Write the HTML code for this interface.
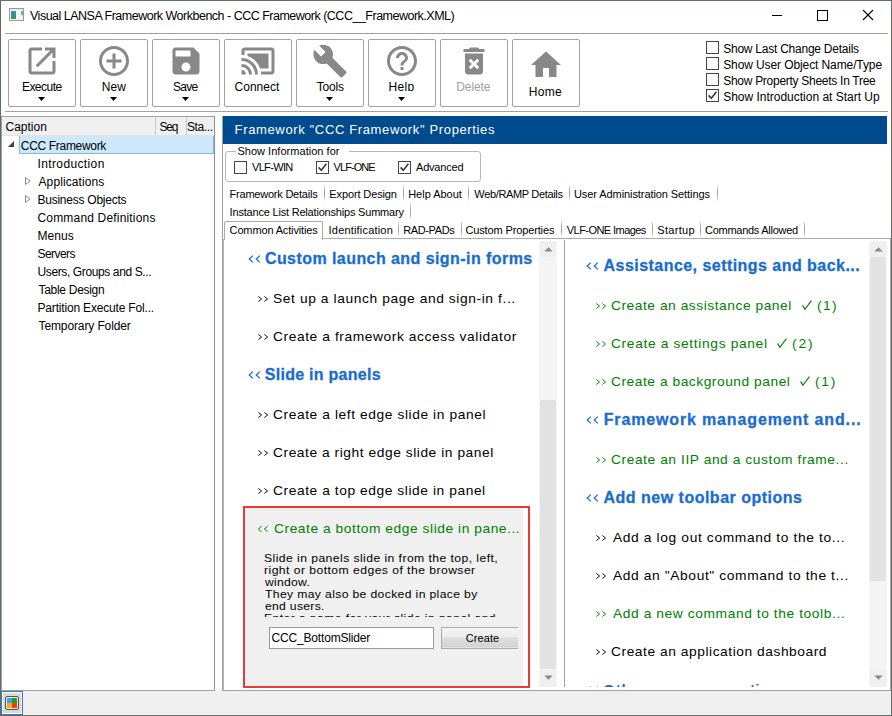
<!DOCTYPE html>
<html><head><meta charset="utf-8"><style>
html,body{margin:0;padding:0;}
body{width:892px;height:716px;position:relative;overflow:hidden;background:#fff;font-family:"Liberation Sans",sans-serif;}
body>div,body>svg{position:absolute;box-sizing:content-box;}
.t{white-space:pre;line-height:normal;}
</style></head><body>
<div style="left:0;top:0;width:890px;height:714px;border:1px solid #5e6e62;"></div>
<div style="left:9px;top:8px;width:13px;height:11px;border:1px solid #9a9a9a;background:#f4f4f4"></div><div style="left:10px;top:9px;width:13px;height:1px;background:#e0e4ea"></div><div style="left:11px;top:11px;width:5px;height:8px;background:linear-gradient(#5080c0,#2f9a60)"></div><div style="left:21px;top:11px;width:2px;height:4px;background:linear-gradient(#7aa0e0,#70c070)"></div><div style="left:772px;top:15px;width:10px;height:1px;background:#000"></div><div style="left:817px;top:10px;width:9px;height:9px;border:1px solid #000"></div><svg style="left:862px;top:9px" width="12" height="12" viewBox="0 0 12 12"><path d="M1 1L11 11M11 1L1 11" stroke="#000" stroke-width="1.1"/></svg><div style="left:5px;top:33px;width:883px;height:1px;background:#a0a0a0"></div><div style="left:5px;top:111px;width:883px;height:1px;background:#a0a0a0"></div><div style="left:8px;top:39px;width:66px;height:66px;border:1px solid #a3a3a3;border-radius:2px;background:#fff"></div><svg style="left:24px;top:43px" width="36" height="36" viewBox="0 0 24 24"><path fill="#888" d="M19 19H5V5h7V3H5c-1.11 0-2 .9-2 2v14c0 1.1.89 2 2 2h14c1.1 0 2-.9 2-2v-7h-2v7zM14 3v2h3.59l-9.830 9.83 1.41 1.41L19 6.41V10h2V3h-7z"/></svg><svg style="left:38px;top:97px" width="7" height="4" viewBox="0 0 7 4"><path d="M0 0H7L3.5 4z" fill="#000"/></svg><div style="left:80px;top:39px;width:66px;height:66px;border:1px solid #a3a3a3;border-radius:2px;background:#fff"></div><svg style="left:96px;top:43px" width="36" height="36" viewBox="0 0 24 24"><path fill="#888" d="M13 7h-2v4H7v2h4v4h2v-4h4v-2h-4V7zm-1-5C6.48 2 2 6.48 2 12s4.48 10 10 10 10-4.48 10-10S17.52 2 12 2zm0 18c-4.41 0-8-3.590-8-8s3.59-8 8-8 8 3.59 8 8-3.59 8-8 8z"/></svg><svg style="left:110px;top:97px" width="7" height="4" viewBox="0 0 7 4"><path d="M0 0H7L3.5 4z" fill="#000"/></svg><div style="left:152px;top:39px;width:66px;height:66px;border:1px solid #a3a3a3;border-radius:2px;background:#fff"></div><svg style="left:168px;top:43px" width="36" height="36" viewBox="0 0 24 24"><path fill="#888" d="M17 3H5c-1.11 0-2 .9-2 2v14c0 1.1.89 2 2 2h14c1.1 0 2-.9 2-2V7l-4-4zm-5 16c-1.66 0-3-1.34-3-3s1.34-3 3-3 3 1.34 3 3-1.34 3-3 3zm3-10H5V5h10v4z"/></svg><svg style="left:182px;top:97px" width="7" height="4" viewBox="0 0 7 4"><path d="M0 0H7L3.5 4z" fill="#000"/></svg><div style="left:224px;top:39px;width:66px;height:66px;border:1px solid #a3a3a3;border-radius:2px;background:#fff"></div><svg style="left:240px;top:43px" width="36" height="36" viewBox="0 0 24 24"><path fill="#888" d="M1 18v3h3c0-1.66-1.34-3-3-3zm0-4v2c2.76 0 5 2.24 5 5h2c0-3.87-3.13-7-7-7zm18-7H5v1.63c3.96 1.28 7.09 4.41 8.37 8.37H19V7zM1 10v2c4.97 0 9 4.03 9 9h2c0-6.08-4.93-11-11-11zm20-7H3c-1.1 0-2 .9-2 2v3h2V5h18v14h-7v2h7c1.1 0 2-.9 2-2V5c0-1.1-.9-2-2-2z"/></svg><div style="left:296px;top:39px;width:66px;height:66px;border:1px solid #a3a3a3;border-radius:2px;background:#fff"></div><svg style="left:312px;top:43px" width="36" height="36" viewBox="0 0 24 24"><path fill="#888" d="M22.7 19l-9.1-9.1c.9-2.3.4-5-1.5-6.9-2-2-5-2.4-7.4-1.3L9 6 6 9 1.6 4.7C.4 7.1.9 10.1 2.9 12.1c1.9 1.9 4.6 2.4 6.9 1.5l9.1 9.1c.4.4 1 .4 1.4 0l2.3-2.3c.5-.4.5-1.1.1-1.4z"/></svg><svg style="left:326px;top:97px" width="7" height="4" viewBox="0 0 7 4"><path d="M0 0H7L3.5 4z" fill="#000"/></svg><div style="left:368px;top:39px;width:66px;height:66px;border:1px solid #a3a3a3;border-radius:2px;background:#fff"></div><svg style="left:384px;top:43px" width="36" height="36" viewBox="0 0 24 24"><path fill="#888" d="M11 18h2v-2h-2v2zm1-16C6.48 2 2 6.48 2 12s4.48 10 10 10 10-4.48 10-10S17.52 2 12 2zm0 18c-4.41 0-8-3.59-8-8s3.59-8 8-8 8 3.59 8 8-3.59 8-8 8zm0-14c-2.21 0-4 1.79-4 4h2c0-1.1.9-2 2-2s2 .9 2 2c0 2-3 1.75-3 5h2c0-2.25 3-2.5 3-5 0-2.21-1.79-4-4-4z"/></svg><svg style="left:398px;top:97px" width="7" height="4" viewBox="0 0 7 4"><path d="M0 0H7L3.5 4z" fill="#000"/></svg><div style="left:440px;top:39px;width:66px;height:66px;border:1px solid #a3a3a3;border-radius:2px;background:#fff"></div><svg style="left:456px;top:43px" width="36" height="36" viewBox="0 0 24 24"><path fill="#888" d="M6 19c0 1.1.9 2 2 2h8c1.1 0 2-.9 2-2V7H6v12zm2.46-7.12l1.41-1.41L12 12.59l2.12-2.12 1.41 1.41L13.41 14l2.12 2.12-1.41 1.41L12 15.41l-2.12 2.12-1.41-1.41L10.59 14l-2.13-2.12zM15.5 4l-1-1h-5l-1 1H5v2h14V4z"/></svg><div style="left:512px;top:39px;width:66px;height:66px;border:1px solid #a3a3a3;border-radius:2px;background:#fff"></div><svg style="left:528px;top:47px" width="36" height="36" viewBox="0 0 24 24"><path fill="#888" d="M10 20v-6h4v6h5v-8h3L12 3 2 12h3v8z"/></svg><div style="left:706px;top:41px;width:11px;height:11px;border:1px solid #444;background:#fff"></div><div style="left:706px;top:57px;width:11px;height:11px;border:1px solid #444;background:#fff"></div><div style="left:706px;top:73px;width:11px;height:11px;border:1px solid #444;background:#fff"></div><div style="left:706px;top:89px;width:11px;height:11px;border:1px solid #444;background:#fff"></div><svg style="left:706px;top:89px" width="13" height="13" viewBox="0 0 13 13"><path d="M2.6 6.4L5.3 9.2L10.4 2.8" stroke="#3a3a3a" stroke-width="1.6" fill="none"/></svg><div style="left:1px;top:116px;width:212px;height:573px;border:1px solid #a0a0a0;border-right-color:#8c8c8c;background:#fff"></div><div style="left:2px;top:117px;width:212px;height:18px;background:#f0f0f0"></div><div style="left:2px;top:135px;width:212px;height:1px;background:#e3e3e3"></div><div style="left:155px;top:117px;width:1px;height:18px;background:#c8c8c8"></div><div style="left:186px;top:117px;width:1px;height:18px;background:#c8c8c8"></div><div style="left:19px;top:136px;width:193px;height:17px;background:#cde8fa;border:1px solid #80b9ee;border-top:none"></div><svg style="left:7px;top:140px" width="8" height="8" viewBox="0 0 8 8"><path d="M7 1V7H1z" fill="#404040"/></svg><svg style="left:24px;top:176px" width="8" height="10" viewBox="0 0 8 10"><path d="M1.5 1.5L6 5L1.5 8.5z" fill="none" stroke="#8a8a8a" stroke-width="1"/></svg><svg style="left:24px;top:194px" width="8" height="10" viewBox="0 0 8 10"><path d="M1.5 1.5L6 5L1.5 8.5z" fill="none" stroke="#8a8a8a" stroke-width="1"/></svg><div style="left:222px;top:116px;width:668px;height:574px;border-left:1px solid #a0a0a0;border-bottom:1px solid #a0a0a0;background:#fff"></div><div style="left:890px;top:238px;width:1px;height:453px;background:#a4a4b0"></div><div style="left:223px;top:116px;width:664px;height:28px;background:#004a8e"></div><div style="left:225px;top:151px;width:254px;height:29px;border:1px solid #b8b8b8;border-radius:3px"></div><div style="left:236px;top:147px;width:113px;height:8px;background:#fff"></div><div style="left:234px;top:161px;width:11px;height:11px;border:1px solid #444;background:#fff"></div><div style="left:316px;top:161px;width:11px;height:11px;border:1px solid #444;background:#fff"></div><svg style="left:316px;top:161px" width="13" height="13" viewBox="0 0 13 13"><path d="M2.6 6.4L5.3 9.2L10.4 2.8" stroke="#3a3a3a" stroke-width="1.6" fill="none"/></svg><div style="left:398px;top:161px;width:11px;height:11px;border:1px solid #444;background:#fff"></div><svg style="left:398px;top:161px" width="13" height="13" viewBox="0 0 13 13"><path d="M2.6 6.4L5.3 9.2L10.4 2.8" stroke="#3a3a3a" stroke-width="1.6" fill="none"/></svg><div style="left:324px;top:185px;width:1px;height:16px;background:linear-gradient(rgba(150,150,160,0.15),#a4a4ac 35%,#a4a4ac 65%,rgba(150,150,160,0.15))"></div><div style="left:403px;top:185px;width:1px;height:16px;background:linear-gradient(rgba(150,150,160,0.15),#a4a4ac 35%,#a4a4ac 65%,rgba(150,150,160,0.15))"></div><div style="left:468px;top:185px;width:1px;height:16px;background:linear-gradient(rgba(150,150,160,0.15),#a4a4ac 35%,#a4a4ac 65%,rgba(150,150,160,0.15))"></div><div style="left:569px;top:185px;width:1px;height:16px;background:linear-gradient(rgba(150,150,160,0.15),#a4a4ac 35%,#a4a4ac 65%,rgba(150,150,160,0.15))"></div><div style="left:717px;top:185px;width:1px;height:16px;background:linear-gradient(rgba(150,150,160,0.15),#a4a4ac 35%,#a4a4ac 65%,rgba(150,150,160,0.15))"></div><div style="left:410px;top:203px;width:1px;height:16px;background:linear-gradient(rgba(150,150,160,0.15),#a4a4ac 35%,#a4a4ac 65%,rgba(150,150,160,0.15))"></div><div style="left:398px;top:221px;width:1px;height:16px;background:linear-gradient(rgba(150,150,160,0.15),#a4a4ac 35%,#a4a4ac 65%,rgba(150,150,160,0.15))"></div><div style="left:461px;top:221px;width:1px;height:16px;background:linear-gradient(rgba(150,150,160,0.15),#a4a4ac 35%,#a4a4ac 65%,rgba(150,150,160,0.15))"></div><div style="left:561px;top:221px;width:1px;height:16px;background:linear-gradient(rgba(150,150,160,0.15),#a4a4ac 35%,#a4a4ac 65%,rgba(150,150,160,0.15))"></div><div style="left:652px;top:221px;width:1px;height:16px;background:linear-gradient(rgba(150,150,160,0.15),#a4a4ac 35%,#a4a4ac 65%,rgba(150,150,160,0.15))"></div><div style="left:700px;top:221px;width:1px;height:16px;background:linear-gradient(rgba(150,150,160,0.15),#a4a4ac 35%,#a4a4ac 65%,rgba(150,150,160,0.15))"></div><div style="left:804px;top:221px;width:1px;height:16px;background:linear-gradient(rgba(150,150,160,0.15),#a4a4ac 35%,#a4a4ac 65%,rgba(150,150,160,0.15))"></div><div style="left:224px;top:221px;width:97px;height:18px;border:1px solid #a9a9a9;border-bottom:none;border-radius:2px 2px 0 0;background:#fff"></div><div style="left:322px;top:238px;width:568px;height:1px;background:#a9a9a9"></div><div style="left:223px;top:239px;width:1px;height:451px;background:#b4b4bc"></div><div style="left:539px;top:241px;width:18px;height:446px;background:#f4f4f4"></div><div style="left:540px;top:241px;width:16px;height:16px;background:#efefef;border-radius:2px"></div><div style="left:540px;top:670px;width:16px;height:17px;background:#efefef;border-radius:2px"></div><div style="left:540px;top:400px;width:16px;height:269px;background:#e2e2e2;border-radius:2px"></div><svg style="left:544px;top:247px" width="9" height="5" viewBox="0 0 9 5"><path d="M0.3 4.6H8.7L4.5 0.2z" fill="#8a8a8a"/></svg><svg style="left:544px;top:675px" width="9" height="5" viewBox="0 0 9 5"><path d="M0.3 0.4H8.7L4.5 4.8z" fill="#8a8a8a"/></svg><div style="left:869px;top:241px;width:18px;height:446px;background:#f4f4f4"></div><div style="left:870px;top:241px;width:16px;height:16px;background:#efefef;border-radius:2px"></div><div style="left:870px;top:670px;width:16px;height:17px;background:#efefef;border-radius:2px"></div><div style="left:870px;top:257px;width:16px;height:324px;background:#e2e2e2;border-radius:2px"></div><svg style="left:874px;top:247px" width="9" height="5" viewBox="0 0 9 5"><path d="M0.3 4.6H8.7L4.5 0.2z" fill="#8a8a8a"/></svg><svg style="left:874px;top:675px" width="9" height="5" viewBox="0 0 9 5"><path d="M0.3 0.4H8.7L4.5 4.8z" fill="#8a8a8a"/></svg><div style="left:564px;top:240px;width:1px;height:447px;background:#a0a0a0"></div><svg style="left:247.5px;top:254px" width="16" height="10" viewBox="0 0 16 10"><path d="M4.8 1.6L1.2 5L4.8 8.4M11.8 1.6L8.2 5L11.8 8.4" stroke="#1a6ccf" stroke-width="1.25" fill="none"/></svg><svg style="left:256.5px;top:295px" width="14" height="8" viewBox="0 0 14 8"><path d="M1.4 1.5L4.6 4L1.4 6.5M7.4 1.5L10.6 4L7.4 6.5" stroke="#000" stroke-width="0.95" fill="none"/></svg><svg style="left:256.5px;top:333px" width="14" height="8" viewBox="0 0 14 8"><path d="M1.4 1.5L4.6 4L1.4 6.5M7.4 1.5L10.6 4L7.4 6.5" stroke="#000" stroke-width="0.95" fill="none"/></svg><svg style="left:247.5px;top:370px" width="16" height="10" viewBox="0 0 16 10"><path d="M4.8 1.6L1.2 5L4.8 8.4M11.8 1.6L8.2 5L11.8 8.4" stroke="#1a6ccf" stroke-width="1.25" fill="none"/></svg><svg style="left:256.5px;top:411px" width="14" height="8" viewBox="0 0 14 8"><path d="M1.4 1.5L4.6 4L1.4 6.5M7.4 1.5L10.6 4L7.4 6.5" stroke="#000" stroke-width="0.95" fill="none"/></svg><svg style="left:256.5px;top:449px" width="14" height="8" viewBox="0 0 14 8"><path d="M1.4 1.5L4.6 4L1.4 6.5M7.4 1.5L10.6 4L7.4 6.5" stroke="#000" stroke-width="0.95" fill="none"/></svg><svg style="left:256.5px;top:487px" width="14" height="8" viewBox="0 0 14 8"><path d="M1.4 1.5L4.6 4L1.4 6.5M7.4 1.5L10.6 4L7.4 6.5" stroke="#000" stroke-width="0.95" fill="none"/></svg><div style="left:243px;top:506px;width:283px;height:178px;border:2px solid #e63c34;background:#fff"></div><div style="left:245px;top:508px;width:278px;height:178px;background:#f0f0f0"></div><svg style="left:257px;top:525px" width="14" height="8" viewBox="0 0 14 8"><path d="M4.6 1.2L1.4 4L4.6 6.8M10.6 1.2L7.4 4L10.6 6.8" stroke="#008000" stroke-width="1" fill="none"/></svg><div style="left:269px;top:627px;width:163px;height:20px;border:1px solid #9a9a9a;background:#fff"></div><div style="left:441px;top:627px;width:76px;height:20px;border:1px solid #acacac;border-right:none;background:linear-gradient(#f4f4f4 0%,#ececec 45%,#dddddd 50%,#d3d3d3 95%,#f0f0f0 100%)"></div><svg style="left:585.7px;top:261px" width="16" height="10" viewBox="0 0 16 10"><path d="M4.8 1.6L1.2 5L4.8 8.4M11.8 1.6L8.2 5L11.8 8.4" stroke="#1a6ccf" stroke-width="1.25" fill="none"/></svg><svg style="left:594.7px;top:302px" width="14" height="8" viewBox="0 0 14 8"><path d="M1.4 1.5L4.6 4L1.4 6.5M7.4 1.5L10.6 4L7.4 6.5" stroke="#008000" stroke-width="0.95" fill="none"/></svg><svg style="left:802.2px;top:300px" width="10" height="10" viewBox="0 0 10 10"><path d="M0.6 5.4L2.9 9.3L9.4 0.6" stroke="#008000" stroke-width="1.15" fill="none"/></svg><svg style="left:594.7px;top:340px" width="14" height="8" viewBox="0 0 14 8"><path d="M1.4 1.5L4.6 4L1.4 6.5M7.4 1.5L10.6 4L7.4 6.5" stroke="#008000" stroke-width="0.95" fill="none"/></svg><svg style="left:777.2px;top:338px" width="10" height="10" viewBox="0 0 10 10"><path d="M0.6 5.4L2.9 9.3L9.4 0.6" stroke="#008000" stroke-width="1.15" fill="none"/></svg><svg style="left:594.7px;top:378px" width="14" height="8" viewBox="0 0 14 8"><path d="M1.4 1.5L4.6 4L1.4 6.5M7.4 1.5L10.6 4L7.4 6.5" stroke="#008000" stroke-width="0.95" fill="none"/></svg><svg style="left:800.2px;top:376px" width="10" height="10" viewBox="0 0 10 10"><path d="M0.6 5.4L2.9 9.3L9.4 0.6" stroke="#008000" stroke-width="1.15" fill="none"/></svg><svg style="left:585.7px;top:415px" width="16" height="10" viewBox="0 0 16 10"><path d="M4.8 1.6L1.2 5L4.8 8.4M11.8 1.6L8.2 5L11.8 8.4" stroke="#1a6ccf" stroke-width="1.25" fill="none"/></svg><svg style="left:594.7px;top:456px" width="14" height="8" viewBox="0 0 14 8"><path d="M1.4 1.5L4.6 4L1.4 6.5M7.4 1.5L10.6 4L7.4 6.5" stroke="#008000" stroke-width="0.95" fill="none"/></svg><svg style="left:585.7px;top:493px" width="16" height="10" viewBox="0 0 16 10"><path d="M4.8 1.6L1.2 5L4.8 8.4M11.8 1.6L8.2 5L11.8 8.4" stroke="#1a6ccf" stroke-width="1.25" fill="none"/></svg><svg style="left:594.7px;top:534px" width="14" height="8" viewBox="0 0 14 8"><path d="M1.4 1.5L4.6 4L1.4 6.5M7.4 1.5L10.6 4L7.4 6.5" stroke="#000" stroke-width="0.95" fill="none"/></svg><svg style="left:594.7px;top:572px" width="14" height="8" viewBox="0 0 14 8"><path d="M1.4 1.5L4.6 4L1.4 6.5M7.4 1.5L10.6 4L7.4 6.5" stroke="#000" stroke-width="0.95" fill="none"/></svg><svg style="left:594.7px;top:610px" width="14" height="8" viewBox="0 0 14 8"><path d="M1.4 1.5L4.6 4L1.4 6.5M7.4 1.5L10.6 4L7.4 6.5" stroke="#008000" stroke-width="0.95" fill="none"/></svg><svg style="left:594.7px;top:648px" width="14" height="8" viewBox="0 0 14 8"><path d="M1.4 1.5L4.6 4L1.4 6.5M7.4 1.5L10.6 4L7.4 6.5" stroke="#000" stroke-width="0.95" fill="none"/></svg><div style="left:580px;top:680px;width:285px;height:7px;overflow:hidden"><svg style="position:absolute;left:6px;top:5px" width="16" height="10" viewBox="0 0 16 10"><path d="M4.8 1.6L1.2 5L4.8 8.4M11.8 1.6L8.2 5L11.8 8.4" stroke="#1a6ccf" stroke-width="1.25" fill="none"/></svg></div><div style="left:1px;top:691px;width:890px;height:24px;background:#f0f0f0"></div><div style="left:1px;top:691px;width:20px;height:22px;border:1px solid #3d7ab8;background:#fff"></div><div style="left:3px;top:693px;width:18px;height:20px;background:#d9d9d9"></div><div style="left:5px;top:696px;width:12px;height:12px;border:1px solid #555;border-radius:2px;background:#e8e8e8"></div><div style="left:7px;top:698px;width:5px;height:5px;background:#3aa0f0;border-radius:1px 0 0 0"></div><div style="left:12px;top:698px;width:5px;height:5px;background:#20a020;border-radius:0 1px 0 0"></div><div style="left:7px;top:703px;width:5px;height:5px;background:#f0b020"></div><div style="left:12px;top:703px;width:5px;height:5px;background:#f04010"></div>
<div class="t" style="left:30.00px;top:9px;font-size:12.5px;font-weight:400;color:#000;letter-spacing:-0.500px;">Visual LANSA Framework Workbench - CCC Framework (CCC__Framework.XML)</div><div class="t" style="left:21.90px;top:80px;font-size:12px;font-weight:400;color:#000;letter-spacing:-0.517px;">Execute</div><div class="t" style="left:101.70px;top:80px;font-size:12px;font-weight:400;color:#000;letter-spacing:0.150px;">New</div><div class="t" style="left:173.00px;top:80px;font-size:12px;font-weight:400;color:#000;letter-spacing:-0.767px;">Save</div><div class="t" style="left:234.50px;top:80px;font-size:12px;font-weight:400;color:#000;letter-spacing:0.033px;">Connect</div><div class="t" style="left:316.70px;top:80px;font-size:12px;font-weight:400;color:#000;letter-spacing:-0.150px;">Tools</div><div class="t" style="left:388.60px;top:80px;font-size:12px;font-weight:400;color:#000;letter-spacing:0.333px;clip-path:inset(0 0 3px 0);">Help</div><div class="t" style="left:456.30px;top:80px;font-size:12px;font-weight:400;color:#a0a0a0;letter-spacing:-0.100px;">Delete</div><div class="t" style="left:528.70px;top:85px;font-size:12px;font-weight:400;color:#000;letter-spacing:0.333px;">Home</div><div class="t" style="left:723.20px;top:42px;font-size:12px;font-weight:400;color:#000;letter-spacing:-0.239px;">Show Last Change Details</div><div class="t" style="left:723.20px;top:58px;font-size:12px;font-weight:400;color:#000;letter-spacing:-0.100px;">Show User Object Name/Type</div><div class="t" style="left:723.20px;top:74px;font-size:12px;font-weight:400;color:#000;letter-spacing:-0.278px;">Show Property Sheets In Tree</div><div class="t" style="left:723.20px;top:90px;font-size:12px;font-weight:400;color:#000;letter-spacing:-0.011px;">Show Introduction at Start Up</div><div class="t" style="left:5.50px;top:120px;font-size:12px;font-weight:400;color:#000;letter-spacing:0.000px;">Caption</div><div class="t" style="left:159.60px;top:120px;font-size:12px;font-weight:400;color:#000;letter-spacing:-1.300px;">Seq</div><div class="t" style="left:187.00px;top:120px;font-size:12px;font-weight:400;color:#000;letter-spacing:-0.400px;">Sta...</div><div class="t" style="left:20.80px;top:139px;font-size:12px;font-weight:400;color:#000;letter-spacing:-0.317px;">CCC Framework</div><div class="t" style="left:37.50px;top:157px;font-size:12px;font-weight:400;color:#000;letter-spacing:0.373px;">Introduction</div><div class="t" style="left:38.50px;top:175px;font-size:12px;font-weight:400;color:#000;letter-spacing:0.100px;">Applications</div><div class="t" style="left:37.50px;top:193px;font-size:12px;font-weight:400;color:#000;letter-spacing:-0.247px;">Business Objects</div><div class="t" style="left:37.50px;top:211px;font-size:12px;font-weight:400;color:#000;letter-spacing:0.178px;">Command Definitions</div><div class="t" style="left:37.50px;top:229px;font-size:12px;font-weight:400;color:#000;letter-spacing:0.075px;">Menus</div><div class="t" style="left:37.50px;top:247px;font-size:12px;font-weight:400;color:#000;letter-spacing:-0.567px;">Servers</div><div class="t" style="left:37.50px;top:265px;font-size:12px;font-weight:400;color:#000;letter-spacing:-0.381px;">Users, Groups and S...</div><div class="t" style="left:38.50px;top:283px;font-size:12px;font-weight:400;color:#000;letter-spacing:-0.291px;">Table Design</div><div class="t" style="left:37.50px;top:301px;font-size:12px;font-weight:400;color:#000;letter-spacing:-0.178px;">Partition Execute Fol...</div><div class="t" style="left:38.50px;top:319px;font-size:12px;font-weight:400;color:#000;letter-spacing:-0.113px;">Temporary Folder</div><div class="t" style="left:234.60px;top:122px;font-size:13px;font-weight:400;color:#fff;letter-spacing:0.640px;">Framework &quot;CCC Framework&quot; Properties</div><div class="t" style="left:237.40px;top:145px;font-size:11px;font-weight:400;color:#000;letter-spacing:0.032px;">Show Information for</div><div class="t" style="left:252.00px;top:161px;font-size:11px;font-weight:400;color:#000;letter-spacing:-0.667px;">VLF-WIN</div><div class="t" style="left:333.60px;top:161px;font-size:11px;font-weight:400;color:#000;letter-spacing:-0.933px;">VLF-ONE</div><div class="t" style="left:416.00px;top:161px;font-size:11px;font-weight:400;color:#000;letter-spacing:-0.200px;">Advanced</div><div class="t" style="left:229.60px;top:188px;font-size:11px;font-weight:400;color:#000;letter-spacing:-0.225px;">Framework Details</div><div class="t" style="left:329.30px;top:188px;font-size:11px;font-weight:400;color:#000;letter-spacing:-0.117px;">Export Design</div><div class="t" style="left:408.20px;top:188px;font-size:11px;font-weight:400;color:#000;letter-spacing:-0.022px;">Help About</div><div class="t" style="left:474.30px;top:188px;font-size:11px;font-weight:400;color:#000;letter-spacing:-0.340px;">Web/RAMP Details</div><div class="t" style="left:574.00px;top:188px;font-size:11px;font-weight:400;color:#000;letter-spacing:-0.081px;">User Administration Settings</div><div class="t" style="left:229.60px;top:206px;font-size:11px;font-weight:400;color:#000;letter-spacing:-0.194px;">Instance List Relationships Summary</div><div class="t" style="left:229.60px;top:224px;font-size:11px;font-weight:400;color:#000;letter-spacing:-0.144px;">Common Activities</div><div class="t" style="left:328.60px;top:224px;font-size:11px;font-weight:400;color:#000;letter-spacing:0.185px;">Identification</div><div class="t" style="left:403.30px;top:224px;font-size:11px;font-weight:400;color:#000;letter-spacing:-0.400px;">RAD-PADs</div><div class="t" style="left:465.40px;top:224px;font-size:11px;font-weight:400;color:#000;letter-spacing:-0.131px;">Custom Properties</div><div class="t" style="left:566.80px;top:224px;font-size:11px;font-weight:400;color:#000;letter-spacing:-0.562px;">VLF-ONE Images</div><div class="t" style="left:657.30px;top:224px;font-size:11px;font-weight:400;color:#000;letter-spacing:0.317px;">Startup</div><div class="t" style="left:705.00px;top:224px;font-size:11px;font-weight:400;color:#000;letter-spacing:-0.273px;">Commands Allowed</div><div class="t" style="left:264.90px;top:250px;font-size:16px;font-weight:700;color:#1a6ccf;letter-spacing:0.437px;-webkit-text-stroke:0.3px #1a6ccf;">Custom launch and sign-in forms</div><div class="t" style="left:273.44px;top:291px;font-size:13px;font-weight:400;color:#000;letter-spacing:0.564px;transform:scaleX(1.06);transform-origin:0 0;">Set up a launch page and sign-in f...</div><div class="t" style="left:273.44px;top:329px;font-size:13px;font-weight:400;color:#000;letter-spacing:0.547px;transform:scaleX(1.06);transform-origin:0 0;">Create a framework access validator</div><div class="t" style="left:264.80px;top:366px;font-size:16px;font-weight:700;color:#1a6ccf;letter-spacing:0.271px;-webkit-text-stroke:0.3px #1a6ccf;">Slide in panels</div><div class="t" style="left:273.44px;top:407px;font-size:13px;font-weight:400;color:#000;letter-spacing:0.550px;transform:scaleX(1.06);transform-origin:0 0;">Create a left edge slide in panel</div><div class="t" style="left:273.44px;top:445px;font-size:13px;font-weight:400;color:#000;letter-spacing:0.516px;transform:scaleX(1.06);transform-origin:0 0;">Create a right edge slide in panel</div><div class="t" style="left:273.44px;top:483px;font-size:13px;font-weight:400;color:#000;letter-spacing:0.535px;transform:scaleX(1.06);transform-origin:0 0;">Create a top edge slide in panel</div><div class="t" style="left:273.54px;top:521px;font-size:13px;font-weight:400;color:#008000;letter-spacing:0.515px;transform:scaleX(1.06);transform-origin:0 0;">Create a bottom edge slide in pane...</div><div class="t" style="left:264.34px;top:552px;font-size:11.5px;font-weight:400;color:#000;letter-spacing:0.400px;transform:scaleX(1.06);transform-origin:0 0;">Slide in panels slide in from the top, left,</div><div class="t" style="left:264.34px;top:564px;font-size:11.5px;font-weight:400;color:#000;letter-spacing:0.414px;transform:scaleX(1.06);transform-origin:0 0;">right or bottom edges of the browser</div><div class="t" style="left:265.40px;top:576px;font-size:11.5px;font-weight:400;color:#000;letter-spacing:0.236px;transform:scaleX(1.06);transform-origin:0 0;">window.</div><div class="t" style="left:265.40px;top:588px;font-size:11.5px;font-weight:400;color:#000;letter-spacing:0.326px;transform:scaleX(1.06);transform-origin:0 0;">They may also be docked in place by</div><div class="t" style="left:265.40px;top:600px;font-size:11.5px;font-weight:400;color:#000;letter-spacing:0.264px;transform:scaleX(1.06);transform-origin:0 0;">end users.</div><div style="left:245px;top:508px;width:278px;height:109px;overflow:hidden"><div class="t" style="position:absolute;left:19.34px;top:104px;font-size:11.5px;font-weight:400;color:#000;letter-spacing:0.374px;transform:scaleX(1.06);transform-origin:0 0;">Enter a name for your slide in panel and</div></div><div class="t" style="left:271.60px;top:631px;font-size:12px;font-weight:400;color:#000;letter-spacing:-0.180px;">CCC_BottomSlider</div><div class="t" style="left:465.70px;top:632px;font-size:11px;font-weight:400;color:#000;letter-spacing:0.100px;">Create</div><div class="t" style="left:603.50px;top:257px;font-size:16px;font-weight:700;color:#1a6ccf;letter-spacing:0.461px;-webkit-text-stroke:0.3px #1a6ccf;">Assistance, settings and back...</div><div class="t" style="left:611.44px;top:298px;font-size:13px;font-weight:400;color:#008000;letter-spacing:0.503px;transform:scaleX(1.06);transform-origin:0 0;">Create an assistance panel</div><div class="t" style="left:816.84px;top:298px;font-size:13px;font-weight:400;color:#008000;letter-spacing:1.302px;transform:scaleX(1.06);transform-origin:0 0;">(1)</div><div class="t" style="left:611.44px;top:336px;font-size:13px;font-weight:400;color:#008000;letter-spacing:0.612px;transform:scaleX(1.06);transform-origin:0 0;">Create a settings panel</div><div class="t" style="left:791.54px;top:336px;font-size:13px;font-weight:400;color:#008000;letter-spacing:1.726px;transform:scaleX(1.06);transform-origin:0 0;">(2)</div><div class="t" style="left:611.44px;top:374px;font-size:13px;font-weight:400;color:#008000;letter-spacing:0.499px;transform:scaleX(1.06);transform-origin:0 0;">Create a background panel</div><div class="t" style="left:814.84px;top:374px;font-size:13px;font-weight:400;color:#008000;letter-spacing:1.632px;transform:scaleX(1.06);transform-origin:0 0;">(1)</div><div class="t" style="left:603.70px;top:411px;font-size:16px;font-weight:700;color:#1a6ccf;letter-spacing:0.854px;-webkit-text-stroke:0.3px #1a6ccf;">Framework management and...</div><div class="t" style="left:611.44px;top:452px;font-size:13px;font-weight:400;color:#008000;letter-spacing:0.532px;transform:scaleX(1.06);transform-origin:0 0;">Create an IIP and a custom frame...</div><div class="t" style="left:603.50px;top:489px;font-size:16px;font-weight:700;color:#1a6ccf;letter-spacing:0.495px;-webkit-text-stroke:0.3px #1a6ccf;">Add new toolbar options</div><div class="t" style="left:612.50px;top:530px;font-size:13px;font-weight:400;color:#000;letter-spacing:0.595px;transform:scaleX(1.06);transform-origin:0 0;">Add a log out command to the to...</div><div class="t" style="left:612.50px;top:568px;font-size:13px;font-weight:400;color:#000;letter-spacing:0.577px;transform:scaleX(1.06);transform-origin:0 0;">Add an &quot;About&quot; command to the t...</div><div class="t" style="left:612.50px;top:606px;font-size:13px;font-weight:400;color:#008000;letter-spacing:0.551px;transform:scaleX(1.06);transform-origin:0 0;">Add a new command to the toolb...</div><div class="t" style="left:611.44px;top:644px;font-size:13px;font-weight:400;color:#000;letter-spacing:0.514px;transform:scaleX(1.06);transform-origin:0 0;">Create an application dashboard</div><div style="left:580px;top:680px;width:285px;height:7px;overflow:hidden"><div class="t" style="position:absolute;left:23.10px;top:1px;font-size:15px;font-weight:700;color:#1a6ccf;letter-spacing:0.921px;">Other common op</div></div><div style="left:580px;top:680px;width:285px;height:7px;overflow:hidden"><div class="t" style="position:absolute;left:170.00px;top:1px;font-size:15px;font-weight:700;color:#1a6ccf;letter-spacing:0.250px;">tions</div></div>
</body></html>
